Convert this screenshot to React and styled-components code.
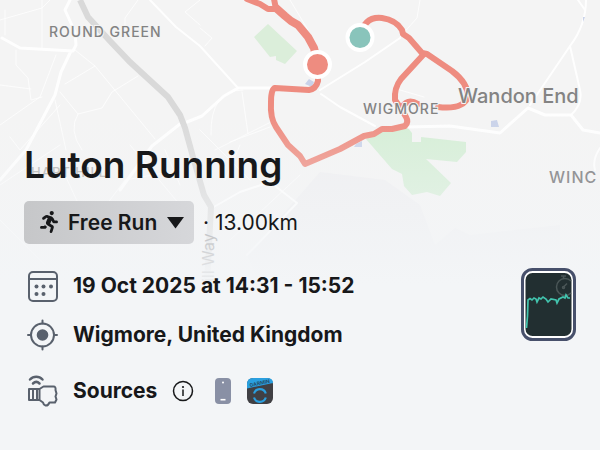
import React from 'react'
import styled, { createGlobalStyle } from 'styled-components'
import { FaRunning } from 'react-icons/fa'

const GlobalStyle = createGlobalStyle`
  *,
  *::before,
  *::after {
    box-sizing: border-box;
  }

  body {
    margin: 0;
    background: #f3f5f7;
    color: #17181a;
    font-family: Inter, 'Liberation Sans', sans-serif;
  }
`

// Map and details share one grid cell, so the text sits on top of the map
const Screen = styled.main`
  display: grid;
  grid-template: minmax(100vh, auto) / minmax(0, 1fr);
  overflow: hidden;

  > * {
    grid-area: 1 / 1;
  }
`

const MapLayer = styled.svg`
  width: 100%;
  height: 100%;
  font-family: Inter, 'Liberation Sans', sans-serif;
`

const Roads = styled.g`
  fill: none;
  stroke: #fff;
  stroke-linecap: round;
  stroke-linejoin: round;
  stroke-opacity: ${props => (props.$width === 1 ? 0.75 : 0.9)};
  stroke-width: ${props => props.$width};
`

const Route = styled.path`
  fill: none;
  stroke: #ee8c80;
  stroke-linecap: round;
  stroke-linejoin: round;
  stroke-width: ${props => (props.$wide ? 8 : 6)};
`

const Marker = styled.circle`
  fill: ${props => props.$color};
  stroke: #fff;
  stroke-width: 4;
`

const labelSizes = { small: 13, medium: 14, large: 20 }

const PlaceLabel = styled.text`
  fill: #838383;
  font-size: ${props => labelSizes[props.$size]}px;
  font-weight: 500;
  letter-spacing: ${props => (props.$size === 'large' ? 0 : 1)}px;
  paint-order: stroke;
  stroke: #f4f4f4;
  stroke-width: 2;
`

const Details = styled.div`
  display: flex;
  flex-direction: column;
  padding: 143px 24px 36px;
`

const Title = styled.h1`
  margin: 0 0 14px;
  font-size: 37px;
  font-weight: 600;
  line-height: 44px;
`

const Summary = styled.div`
  display: flex;
  align-items: center;
  gap: 9px;
  margin-bottom: 24px;
  font-size: 21px;
  line-height: 26px;
`

const ActivityPicker = styled.label`
  position: relative;
  display: flex;

  svg {
    position: absolute;
    top: 10px;
    left: 14px;
    pointer-events: none;
  }

  svg:last-child {
    left: auto;
    right: 9px;
  }
`

const ActivitySelect = styled.select`
  appearance: none;
  height: 43px;
  padding: 0 36px 0 44px;
  border: none;
  border-radius: 5px;
  background: linear-gradient(90deg, #c6c7c9, #d6d7da);
  color: inherit;
  font: 600 21px Inter, 'Liberation Sans', sans-serif;
`

const Info = styled.div`
  display: flex;
  align-items: flex-start;
  justify-content: space-between;
  gap: 16px;
`

const InfoList = styled.ul`
  display: flex;
  flex-direction: column;
  gap: 17px;
  margin: 0;
  padding: 2px 0 0;
  list-style: none;
`

const InfoRow = styled.li`
  display: flex;
  align-items: center;
  gap: 14px;
  min-height: 32px;
  padding-left: 3px;
  font-size: 21px;
  font-weight: 700;
  line-height: 26px;
`

const Sources = styled.div`
  display: flex;
  align-items: center;
  gap: 15px;
  margin-top: 24px;
`

const InfoButton = styled.button`
  display: flex;
  padding: 0;
  border: none;
  background: none;
  color: inherit;
`

const SourceIcons = styled.div`
  display: flex;
  align-items: center;
  gap: 16px;
  margin-left: 6px;
`

const WatchButton = styled.button`
  display: flex;
  padding: 0;
  border: none;
  background: none;
`

const LineIcon = styled.svg`
  flex: none;
  fill: none;
  stroke: #59616d;
  stroke-width: 2;
  stroke-linejoin: round;
  stroke-linecap: round;
`

const ArrowIcon = () => (
  <svg width="19" height="22" viewBox="0 0 19 22" aria-hidden="true">
    <path d="M1 6H18L9.500 17.500Z" fill="#17181a" />
  </svg>
)

const CalendarIcon = () => (
  <LineIcon width="32" height="32" viewBox="0 0 32 32" aria-hidden="true">
    <rect x="2" y="2" width="28" height="29" rx="4" />
    <path d="M2 9H30" />
    <g fill="#59616d" stroke="none">
      <circle cx="9.500" cy="16.500" r="2" />
      <circle cx="16.500" cy="16.500" r="2" />
      <circle cx="24" cy="16.500" r="2" />
      <circle cx="9.500" cy="24" r="2" />
      <circle cx="16.500" cy="24" r="2" />
    </g>
  </LineIcon>
)

const LocationIcon = () => (
  <LineIcon width="32" height="32" viewBox="0 0 32 32" strokeWidth="2.500" aria-hidden="true">
    <circle cx="15.500" cy="16" r="11.500" />
    <circle cx="15.500" cy="16" r="5.800" fill="#59616d" stroke="none" />
    <path d="M15.500 1.500V4.500M15.500 27.500V30.500M1 16H4M27 16H30" />
  </LineIcon>
)

const WearableIcon = () => (
  <LineIcon width="32" height="32" viewBox="0 0 32 32" aria-hidden="true">
    <path d="M3 4.500C6.500 .8 12 .8 15.500 4.500M6 8.500C8 6.500 10.500 6.500 12.500 8.500" strokeWidth="2.500" />
    <path d="M12.500 14H2V25H12.500M6 14V25M10 14V25M12.500 14L16.500 11.500H26.500Q29 11.500 28.500 15L29.500 18.500L28.500 21.500L29.500 24.500L28 27.500H22.500Q21 31 18.500 30.500Q16.500 30 16 27.500L12.500 25Z" />
  </LineIcon>
)

const InfoIcon = () => (
  <svg width="22" height="22" viewBox="0 0 22 22" fill="none" aria-hidden="true">
    <circle cx="11" cy="11" r="9.500" stroke="#17181a" strokeWidth="1.500" />
    <circle cx="11" cy="7" r="1.100" fill="#17181a" />
    <path d="M11 9.500V16" stroke="#17181a" strokeWidth="1.500" />
  </svg>
)

const PhoneIcon = () => (
  <svg width="16" height="26" viewBox="0 0 16 26" role="img" aria-label="Phone">
    <rect width="16" height="26" rx="4" fill="#8990a5" />
    <circle cx="8" cy="4.500" r="1" fill="#fff" />
    <path d="M5.500 21.700H10.500" stroke="#fff" strokeWidth="1.600" />
  </svg>
)

const GarminIcon = () => (
  <svg width="26" height="26" viewBox="0 0 26 26" role="img" aria-label="Garmin Connect">
    <rect width="26" height="26" rx="6" fill="#404044" />
    <path d="M0 10.500V6Q0 0 6 0H20Q26 0 26 5Z" fill="#2a9fdf" />
    <text
      x="3"
      y="9"
      transform="rotate(-12 3 9)"
      fill="#25506b"
      fontFamily="Inter, sans-serif"
      fontSize="5"
      fontWeight="700"
    >
      GARMIN
    </text>
    <path
      d="M7 15.500A6.200 6.200 0 0 1 18.800 15.500M18.800 19.500A6.200 6.200 0 0 1 7 19.500"
      fill="none"
      stroke="#2a9fdf"
      strokeWidth="2.200"
    />
  </svg>
)

const WatchFace = () => (
  <svg width="55" height="74" viewBox="0 0 55 74" fill="none" aria-hidden="true">
    <rect x="1.500" y="1.500" width="52" height="70" rx="10" fill="#fff" stroke="#47506b" strokeWidth="3" />
    <rect x="4.500" y="5" width="46" height="63" rx="7" fill="#222f31" />
    <g stroke="#4a5657" strokeWidth="1.500">
      <path d="M50 13A8.500 8.500 0 1 0 50 25M40 8H45M42.500 8V11M42.500 19L46 15.500" />
      <circle cx="42.500" cy="19.500" r="1" />
    </g>
    <path
      d="M5.500 60L6.500 48L7 32L9 30.500L11 32L13 30L15 31L16 34L18 30L20 31L22 29L25 31L27 34L30 31L35 32L36 35L38 31L42 29L44 30L45 27L47 30H49"
      stroke="#42c4ae"
      strokeWidth="1.700"
    />
  </svg>
)

const RouteMap = () => (
  <MapLayer viewBox="0 0 600 450" preserveAspectRatio="xMinYMin slice">
    <defs>
      <linearGradient id="fade" x1="0" y1="0" x2="0" y2="1">
        <stop offset="0.250" stopColor="#f3f5f7" stopOpacity="0" />
        <stop offset="0.420" stopColor="#f3f5f7" stopOpacity="0.350" />
        <stop offset="0.630" stopColor="#f3f5f7" />
      </linearGradient>
      <linearGradient id="streetLabel" gradientUnits="userSpaceOnUse" x1="0" y1="0" x2="54" y2="0">
        <stop offset="0" stopColor="#eceef0" />
        <stop offset="1" stopColor="#bfc0c3" />
      </linearGradient>
    </defs>
    <rect width="600" height="450" fill="#f4f4f4" />

    <path d="M268 24L297 51L285 64L276 60V56L270 57L254 37Z" fill="#dbeeda" />
    <path
      d="M366 139L382 131L408 128L412 133V142H421V137L466 142V152L457 162L426 159L451 183L440 196L427 192L412 195L404 186L402 174L392 169Z"
      fill="#d5eed6"
    />
    <path d="M320 172L385 180L420 205L435 245L455 228L470 235L560 225V290H262L247 255Z" fill="#efeff1" />

    <Roads $width={1}>
      <path d="M42 0V48M0 20L42 8L50 0M5 10V35M16 50V65L28 78L31 100L42 97M0 85L31 89M0 125L40 97L56 55M75 50L95 66L65 84M95 66L155 139M138 76L112 92L102 108L78 114L60 92M78 114Q68 130 82 150M55 100L66 150M10 137L20 150L60 105M138 0L125 18V35M200 25L185 12L200 0" />
      <path d="M290 0L308 30M200 28L212 38L205 46M242 92L248 134M270 127L230 142M243 90Q210 90 211 135M420 0L417 18L400 37M400 90L424 97M0 185L60 145M65 175L95 240M0 220L45 265M130 145L180 205M200 130L250 180" />
      <path d="M215 150L275 120M165 150L180 185M225 180L240 145M80 240L125 180L180 170M230 240L300 175" />
    </Roads>
    <Roads $width={2}>
      <path d="M150 0L176 27L200 46L238 88M320 90L365 62L400 38M321 94L340 107L375 126M570 46L530 105M570 46L580 90Q583 104 571 115M570 46Q586 25 586 0M578 0L585 10M600 148Q592 160 595 170M212 208L240 192L270 182L297 203L247 255" />
    </Roads>
    <Roads $width={3}>
      <path d="M70 0L65 10L75 32L76 45L73 51L20 48L2 38M71 51L61 72L55 95L26 150L0 180" />
      <path d="M180 124L152 146L120 190M187 122L202 116L224 96L238 88L272 88M408 127L450 126L500 133L528 108L545 115H571L583 130L600 133" />
    </Roads>

    <path
      d="M80 0L88 17L110 41L130 62L168 97L180 115L185 128L193 157L204 195L211 207L207 285"
      fill="none"
      stroke="#d9d9d9"
      strokeWidth="6"
    />
    <path d="M309 79L314 82L312 87L305 84ZM356 144L362 141V147H354ZM491 121L497 120L499 127H491ZM583 17H585L583 22Z" fill="#c9d2e9" />

    <Route d="M247 -1L260 4L268 9H276L274 -1" />
    <Route $wide d="M276 8L285 16L291 21L298 25L308 37L314 48L318 64" />
    <Route d="M318 64V81Q316 89 309 90L275 88Q271 89 271 102Q270 118 276 127L288 145L300 156L305 164L340 149L364 136L374 134L382 129L392 129L405 126Q409 122 406 117L402 110L395 100Q394 88 401 79L424 54" />
    <Route d="M360 37Q364 16 382 18Q396 20 402 30L403 34L409 38L422 53L427 54L452 71Q468 83 468 97Q463 110 438 107M402 107Q408 98 418 104" />

    <Marker cx="317.500" cy="64.500" r="12.500" $color="#ee8c80" />
    <Marker cx="360" cy="37.500" r="12.500" $color="#89c4bb" />

    <PlaceLabel $size="medium" x="49" y="37">ROUND GREEN</PlaceLabel>
    <PlaceLabel $size="medium" x="363" y="114">WIGMORE</PlaceLabel>
    <PlaceLabel $size="large" x="458" y="103">Wandon End</PlaceLabel>
    <PlaceLabel $size="small" x="31" y="177" opacity="0.600">HART HILL</PlaceLabel>

    <rect width="600" height="450" fill="url(#fade)" />
    <text x="549" y="183" fill="#949497" fontSize="16" fontWeight="500" letterSpacing="1">
      WINC
    </text>
    <text transform="translate(214 282) rotate(-90)" fill="url(#streetLabel)" fontSize="16">
      ill Way
    </text>
  </MapLayer>
)

const App = () => (
  <Screen>
    <GlobalStyle />
    <RouteMap />
    <Details>
      <Title>Luton Running</Title>
      <Summary>
        <ActivityPicker>
          <FaRunning size={22} aria-hidden="true" />
          <ActivitySelect aria-label="Activity type">
            <option>Free Run</option>
          </ActivitySelect>
          <ArrowIcon />
        </ActivityPicker>
        <span>· 13.00km</span>
      </Summary>
      <Info>
        <InfoList>
          <InfoRow>
            <CalendarIcon />
            19 Oct 2025 at 14:31 - 15:52
          </InfoRow>
          <InfoRow>
            <LocationIcon />
            Wigmore, United Kingdom
          </InfoRow>
        </InfoList>
        <WatchButton type="button" aria-label="Watch recording">
          <WatchFace />
        </WatchButton>
      </Info>
      <Sources>
        <InfoRow as="div">
          <WearableIcon />
          Sources
        </InfoRow>
        <InfoButton type="button" aria-label="About sources">
          <InfoIcon />
        </InfoButton>
        <SourceIcons>
          <PhoneIcon />
          <GarminIcon />
        </SourceIcons>
      </Sources>
    </Details>
  </Screen>
)

export default App
